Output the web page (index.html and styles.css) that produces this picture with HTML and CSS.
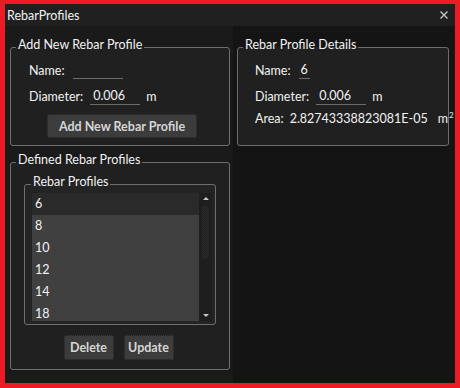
FILE: index.html
```html
<!DOCTYPE html>
<html lang="en">
<head>
    <meta charset="UTF-8">
    <title>RebarProfiles</title>
    <link rel="stylesheet" href="styles.css">
</head>
<body>
    <div class="window">
        <div class="titlebar">
            <span class="title">RebarProfiles</span>
            <svg class="close" width="8" height="8" viewBox="0 0 8 8">
                <path d="M0.5 0.5 L7.5 7.5 M7.5 0.5 L0.5 7.5" stroke="#c4c4c4" stroke-width="1.4"/>
            </svg>
        </div>
        <div class="content">
            <div class="left-col">
                <fieldset class="group add-group">
                    <legend>Add New Rebar Profile</legend>
                    <div class="group-body">
                        <div class="row">
                            <span class="label">Name:</span>
                            <span class="field name-field"></span>
                        </div>
                        <div class="row">
                            <span class="label">Diameter:</span>
                            <span class="field dia-field">0.006</span>
                            <span class="unit">m</span>
                        </div>
                        <button class="btn add-btn">Add New Rebar Profile</button>
                    </div>
                </fieldset>

                <fieldset class="group defined-group">
                    <legend>Defined Rebar Profiles</legend>
                    <div class="group-body">
                        <fieldset class="group list-group">
                            <legend>Rebar Profiles</legend>
                            <div class="group-body">
                                <div class="listbox">
                                    <div class="items">
                                        <div class="item selected">6</div>
                                        <div class="item">8</div>
                                        <div class="item">10</div>
                                        <div class="item">12</div>
                                        <div class="item">14</div>
                                        <div class="item">18</div>
                                    </div>
                                    <div class="scrollbar">
                                        <span class="arrow up"></span>
                                        <span class="thumb"></span>
                                        <span class="arrow down"></span>
                                    </div>
                                </div>
                            </div>
                        </fieldset>
                        <div class="actions">
                            <button class="btn small-btn">Delete</button>
                            <button class="btn small-btn">Update</button>
                        </div>
                    </div>
                </fieldset>
            </div>

            <div class="right-col">
                <fieldset class="group details-group">
                    <legend>Rebar Profile Details</legend>
                    <div class="group-body">
                        <div class="row">
                            <span class="label">Name:</span>
                            <span class="field short-field">6</span>
                        </div>
                        <div class="row">
                            <span class="label">Diameter:</span>
                            <span class="field dia-field">0.006</span>
                            <span class="unit">m</span>
                        </div>
                        <div class="row area-row">
                            <span class="label">Area:</span>
                            <span class="value">2.82743338823081E-05</span>
                            <span class="unit">m<sup>2</sup></span>
                        </div>
                    </div>
                </fieldset>
            </div>
        </div>
    </div>
</body>
</html>
```

FILE: styles.css
```css
body {
    margin: 0;
    background-color: #ed1c24;
    font-family: Lato, "Liberation Sans", sans-serif;
    font-size: 12.5px;
    color: #f2f2f2;
}
.window {
    margin: 4px 5px 5px 5px;
    height: 379px;
    background-color: #141414;
    display: flex;
    flex-direction: column;
}
.titlebar {
    height: 22px;
    background-color: #202020;
    display: flex;
    align-items: center;
    justify-content: space-between;
    padding: 0 7px 0 2px;
}
.close {
    margin-top: -1px;
}
.content {
    flex: 1;
    display: flex;
}
.left-col {
    flex: none;
    width: 220px;
    padding: 11px 3px 0 5px;
    background-color: #1a1a1a;
    display: flex;
    flex-direction: column;
    gap: 6px;
}
.right-col {
    flex: 1;
    min-width: 0;
    padding: 11px 6px 0 4px;
}

/* group boxes */
.group {
    margin: 0;
    padding: 0;
    min-width: 0;
    border: 1px solid #6e6e6e;
    border-radius: 3px;
    background-color: #202020;
}
.group legend {
    margin-left: 5px;
    padding: 0 2px 4px 2px;
    line-height: 16px;
}
.add-group .group-body {
    padding: 0 0 7px 18px;
}
.details-group .group-body {
    padding: 0 0 18px 17px;
}
.row {
    height: 26px;
    display: flex;
    align-items: center;
    gap: 8px;
    white-space: nowrap;
}
.area-row {
    height: 18px;
    gap: 6px;
}
.field {
    height: 18px;
    line-height: 17px;
    box-sizing: border-box;
    border-bottom: 1px solid #6c6c6c;
    padding-left: 3px;
}
.name-field {
    width: 50px;
}
.dia-field {
    width: 50px;
    margin-left: -1px;
}
.short-field {
    width: 11px;
    padding-left: 2px;
}
.unit {
    margin-left: -2px;
}
.area-row .unit {
    margin-left: 4px;
}
.unit sup {
    font-size: 8px;
    vertical-align: 5px;
    margin-left: 1px;
}

/* buttons */
.btn {
    font-family: inherit;
    font-size: 12.5px;
    font-weight: bold;
    color: #d6d6d6;
    background-color: #3c3c3c;
    border: 1px solid #2c2c2c;
    border-radius: 2px;
    padding: 0;
}
.add-btn {
    width: 150px;
    height: 24px;
    margin: 5px 0 0 18px;
}
.small-btn {
    width: 50px;
    height: 25px;
    border-style: dotted;
    border-color: #1e1e1e;
}

/* defined profiles */
.defined-group > .group-body {
    padding: 2px 13px 9px 13px;
}
.list-group {
    background-color: #242424;
}
.list-group legend {
    margin-left: 6px;
}
.list-group .group-body {
    padding: 0 3px 3px 7px;
}
.listbox {
    margin-top: -1px;
    height: 128px;
    display: flex;
    background-color: #404040;
    overflow: hidden;
}
.items {
    flex: 1;
}
.item {
    height: 22px;
    line-height: 22px;
    padding-left: 3px;
}
.item.selected {
    background-color: #2a2a2a;
}
.scrollbar {
    width: 13px;
    background-color: #1e1e1e;
    display: flex;
    flex-direction: column;
    align-items: center;
}
.arrow {
    width: 0;
    height: 0;
    border-left: 3px solid transparent;
    border-right: 3px solid transparent;
}
.arrow.up {
    margin-top: 4px;
    border-bottom: 3px solid #c8c8c8;
}
.arrow.down {
    margin-top: auto;
    margin-bottom: 4px;
    border-top: 3px solid #c8c8c8;
}
.thumb {
    width: 7px;
    height: 53px;
    margin-top: 6px;
    border-radius: 3px;
    background: repeating-conic-gradient(#303030 0 25%, #1c1c1c 0 50%) 0 0 / 2px 2px;
}
.actions {
    display: flex;
    justify-content: center;
    gap: 10px;
    margin-top: 10px;
    padding-right: 3px;
}
```
